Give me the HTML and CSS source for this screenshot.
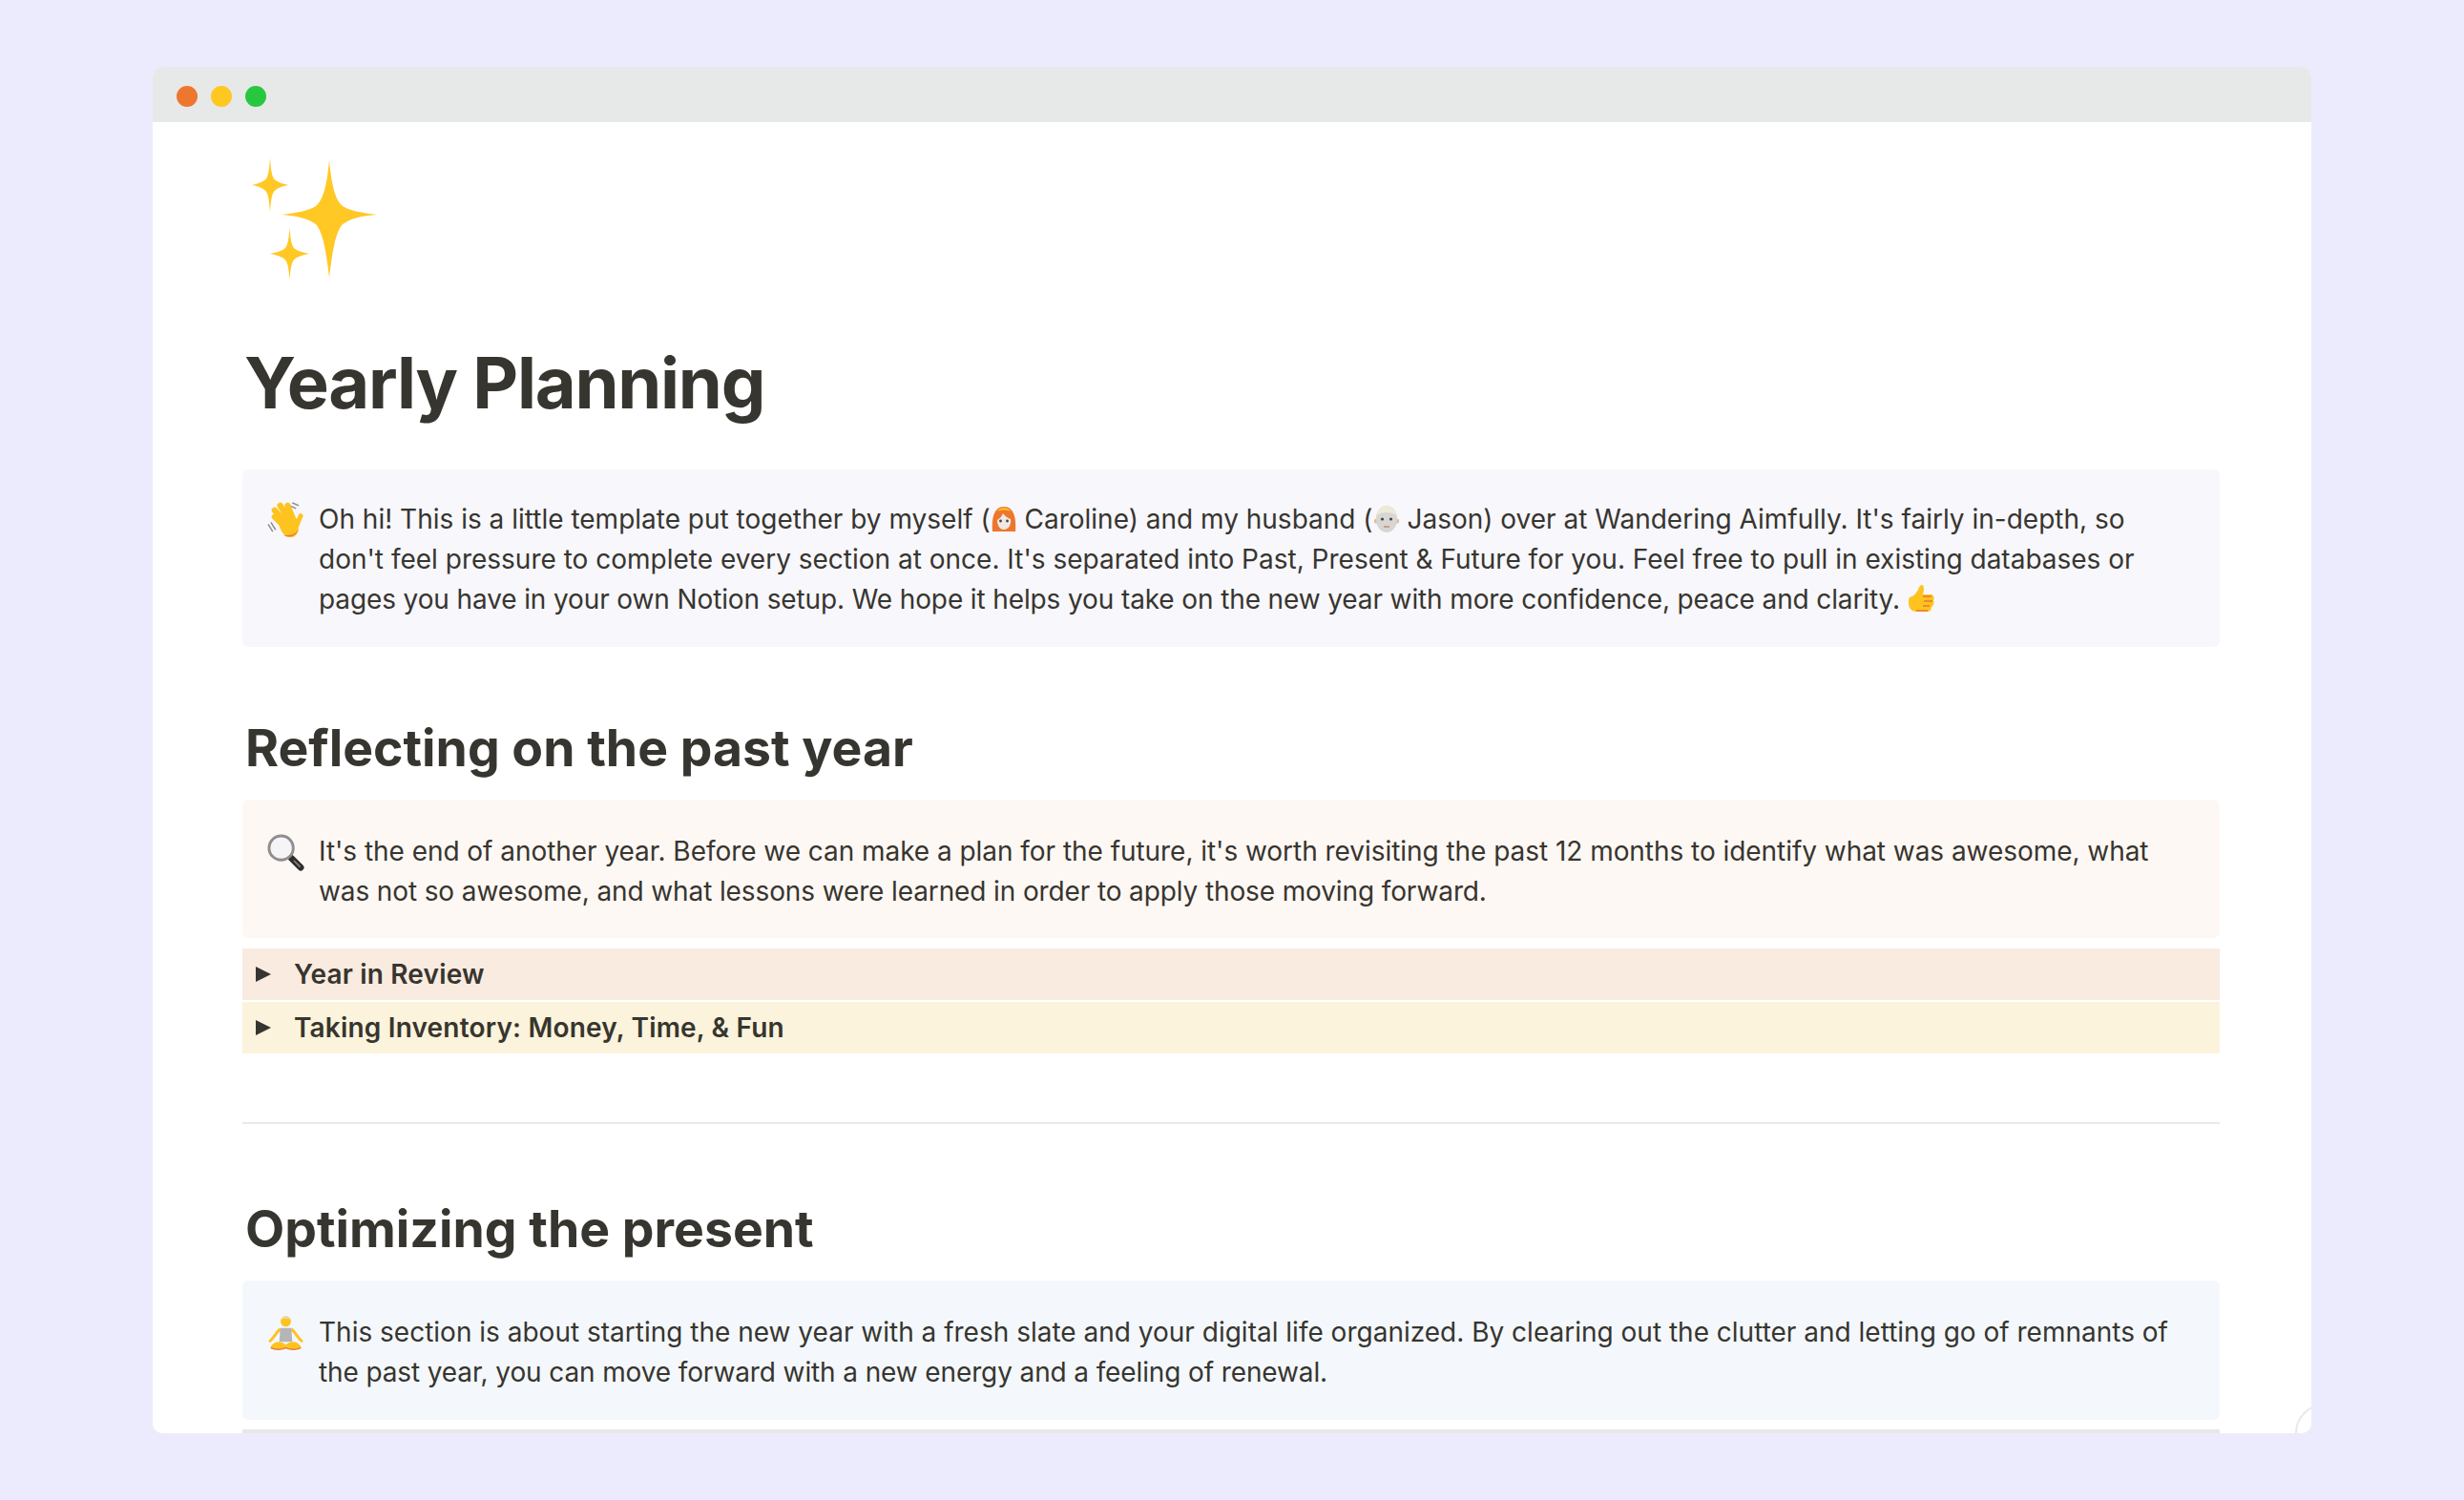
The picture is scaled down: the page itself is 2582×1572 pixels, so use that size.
FILE: index.html
```html
<!DOCTYPE html>
<html lang="en">
<head>
    <meta charset="UTF-8">
    <title>Yearly Planning</title>
    <link rel="stylesheet" href="styles.css">
</head>
<body>
    <div class="window">
        <div class="title-bar">
            <span class="dot dot-red"></span>
            <span class="dot dot-yellow"></span>
            <span class="dot dot-green"></span>
        </div>

        <div class="page">
            <svg class="page-icon" viewBox="0 0 132 128">
                <path class="star" d="M81 2C83.500 28 87 43 95 50C103 55 115 57 131 59C115 60 103 63 95 69C87 78 84 100 81 125C78 100 75 78 67 69C59 63 47 60 31 59C47 57 59 55 67 50C75 43 78.500 28 81 2Z"/>
                <path class="star" transform="translate(19 28) scale(19.500 29)" d="M0 -1C.05 -.45 .12 -.24 .32 -.16C.45 -.1 .7 -.03 1 0C.7 .03 .45 .1 .32 .16C.12 .24 .05 .45 0 1C-.05 .45 -.12 .24 -.32 .16C-.45 .1 -.7 .03 -1 0C-.7 -.03 -.45 -.1 -.32 -.16C-.12 -.24 -.05 -.45 0 -1Z"/>
                <path class="star" transform="translate(39.500 100) scale(21 27.500)" d="M0 -1C.05 -.45 .12 -.24 .32 -.16C.45 -.1 .7 -.03 1 0C.7 .03 .45 .1 .32 .16C.12 .24 .05 .45 0 1C-.05 .45 -.12 .24 -.32 .16C-.45 .1 -.7 .03 -1 0C-.7 -.03 -.45 -.1 -.32 -.16C-.12 -.24 -.05 -.45 0 -1Z"/>
            </svg>

            <h1 class="page-title">Yearly Planning</h1>

            <div class="callout callout-grey">
                <svg class="callout-icon" viewBox="0 0 40 40">
                    <path d="M1 24l5 8M4 22l5 8M24 4l7 3M27 1l7 3" fill="none" stroke="#8d8d8d" stroke-width="1.500"/>
                    <g stroke="#ffc31f" stroke-width="6.400" stroke-linecap="round">
                        <path d="M18 26L8 16M20 22L8 9M24 20L14 4M28 19L22 4"/>
                        <path d="M31 27L36 15" stroke-width="5"/>
                    </g>
                    <path d="M12 20C14 36 22 38 26 38C32 38 35 31 33 20C32 15 18 14 12 20Z" fill="#ffc31f"/>
                    <path d="M17 35C22 39 31 39 35 27C33 33 26 38 17 35Z" fill="#ed772f"/>
                </svg>
                <p class="callout-text">Oh hi! This is a little template put together by myself (<svg class="inline-emoji" viewBox="2 0 26 28">
                    <path d="M3 27C2 14 4 1 15 1C26 1 28 14 27 27Z" fill="#ed772f"/>
                    <path d="M8 6C10 1 20 1 22 6C18 4 12 4 8 6Z" fill="#ffc31f"/>
                    <path d="M8 15C11 13 13 11 14 8C16 11 19 13 22 14C23 21 19 25 15 25C11 25 8 21 8 15Z" fill="#efe9e2"/>
                    <circle cx="11.500" cy="16" r="1.400" fill="#444"/><circle cx="18.500" cy="16" r="1.400" fill="#444"/>
                </svg> Caroline) and my husband (<svg class="inline-emoji" viewBox="1 0 28 28">
                    <circle cx="4.500" cy="16" r="2.600" fill="#e9b98f"/><circle cx="25.500" cy="16" r="2.600" fill="#e9b98f"/>
                    <ellipse cx="15" cy="14" rx="11" ry="14" fill="#d6d6d2"/>
                    <path d="M5 10C6 3 11 0 15 0C19 0 24 3 25 10C19 6 11 6 5 10Z" fill="#efe9d8"/>
                    <circle cx="10.500" cy="14" r="1.600" fill="#444"/><circle cx="19.500" cy="14" r="1.600" fill="#444"/>
                    <path d="M12 22h6" stroke="#d08a70" stroke-width="1.500"/>
                </svg> Jason) over at Wandering Aimfully. It's fairly in-depth, so don't feel pressure to complete every section at once. It's separated into Past, Present &amp; Future for you. Feel free to pull in existing databases or <span class="tight">pages you have in your own Notion setup. We hope it helps you take on the new year with more confidence, peace and clarity.</span> <svg class="inline-emoji emoji-thumb" viewBox="1 0 28 30">
                    <path d="M3 14C7 13 10 10 12 6C13 3 14 1 16 1C19 2 18 8 17 11L26 11C29 12 29 16 28 17C29 20 28 23 26 24C26 27 24 29 22 29L10 29C6 29 2 26 2 20C2 17 2 15 3 14Z" fill="#ffc31f"/>
                    <path d="M17 13h9M18 18h9M17 23h7M10 28h12" stroke="#ed772f" stroke-width="1.600" fill="none"/>
                </svg></p>
            </div>

            <h2 class="section-title section-first">Reflecting on the past year</h2>

            <div class="callout callout-orange">
                <svg class="callout-icon" viewBox="0 0 40 40">
                    <path d="M26 26L36 36" stroke="#2e2e2e" stroke-width="7" stroke-linecap="round"/>
                    <path d="M29 29L35 35" stroke="#888" stroke-width="1.500" stroke-linecap="round"/>
                    <circle cx="15" cy="15" r="13" fill="#f5f5f7" stroke="#8e8e8e" stroke-width="3"/>
                </svg>
                <p class="callout-text">It's the end of another year. Before we can make a plan for the future, it's worth revisiting the past 12 months to identify what was awesome, what <span class="tight">was not so awesome, and what lessons were learned in order to apply those moving forward.</span></p>
            </div>

            <div class="toggle toggle-orange"><span class="toggle-arrow"></span>Year in Review</div>
            <div class="toggle toggle-yellow"><span class="toggle-arrow"></span>Taking Inventory: Money, Time, &amp; Fun</div>

            <hr class="divider">

            <h2 class="section-title">Optimizing the present</h2>

            <div class="callout callout-blue">
                <svg class="callout-icon" viewBox="0 0 40 40">
                    <path d="M13 16C9 20 7 25 3 28M27 16C31 20 33 25 37 28" fill="none" stroke="#ffc31f" stroke-width="3" stroke-linecap="round"/>
                    <path d="M14 14H26L27 29H13Z" fill="#b5b5b5"/>
                    <circle cx="20" cy="7" r="5.600" fill="#ffc31f"/>
                    <path d="M15 5C16 1 24 1 25 5C22 3.500 18 3.500 15 5Z" fill="#e3dccb"/>
                    <path d="M3 35C8 27 15 28 20 32C25 28 32 27 37 35C30 38 25 37 20 35C15 37 10 38 3 35Z" fill="#ffc31f"/>
                    <path d="M4 35.500C10 38 15 37.500 20 35.500C25 37.500 30 38 36 35.500" fill="none" stroke="#ed772f" stroke-width="1.500"/>
                </svg>
                <p class="callout-text">This section is about starting the new year with a fresh slate and your digital life organized. By clearing out the clutter and letting go of remnants of <span class="tight">the past year, you can move forward with a new energy and a feeling of renewal.</span></p>
            </div>

            <div class="toggle-cut"></div>
        </div>

        <div class="help-circle"></div>
    </div>
</body>
</html>
```

FILE: styles.css
```css
body {
    margin: 0;
    padding: 70px 160px 0;
    height: 1502px;
    background: #ebebfd;
    font-family: 'Inter', sans-serif;
    color: #37352f;
    overflow: hidden;
}

.window {
    position: relative;
    height: 1432px;
    background: #fff;
    border-radius: 10px;
    overflow: hidden;
}

.title-bar {
    display: flex;
    align-items: center;
    gap: 14px;
    box-sizing: border-box;
    height: 58px;
    padding: 3px 0 0 25px;
    background: #e7e9e8;
}

.dot {
    width: 22px;
    height: 22px;
    border-radius: 50%;
}

.dot-red { background: #ed772f; }
.dot-yellow { background: #ffc721; }
.dot-green { background: #27c840; }

.page {
    padding: 38px 96px 0 94px;
}

.page-icon {
    display: block;
    width: 132px;
    height: 128px;
    margin-left: 10px;
}

.star {
    fill: #ffc824;
}

.page-title {
    margin: 62px 0 0 2px;
    font-size: 74px;
    line-height: 90px;
    font-weight: 700;
    letter-spacing: -1.25px;
}

.callout {
    display: flex;
    align-items: flex-start;
    gap: 15px;
    border-radius: 6px;
}

.page-title + .callout {
    margin-top: 46px;
}

.callout-grey {
    padding: 31px 40px 29px 26px;
    background: #f7f7fc;
}

.callout-orange {
    padding: 33px 40px 28px 26px;
    background: #fef8f4;
    letter-spacing: -0.045px;
}

.callout-blue {
    padding: 33px 40px 29px 26px;
    background: #f4f8fc;
}

.callout-icon {
    flex: none;
    width: 39px;
    height: 39px;
    margin-top: 3px;
}

.callout-text {
    margin: 0;
    font-size: 28px;
    line-height: 42px;
}

.tight {
    letter-spacing: -0.12px;
}

.inline-emoji {
    width: 28px;
    height: 28px;
    vertical-align: -4px;
}

.emoji-thumb {
    height: 30px;
}

.section-title {
    margin: 80px 0 0 3px;
    font-size: 53.5px;
    line-height: 60px;
    font-weight: 700;
}

.section-first {
    margin-top: 76px;
}

.section-title + .callout {
    margin-top: 24px;
}

.toggle {
    display: flex;
    align-items: center;
    height: 54px;
    padding-left: 14px;
    font-size: 28px;
    font-weight: 600;
    letter-spacing: 0.18px;
}

.toggle-orange {
    margin-top: 11px;
    background: #f9ebdf;
}

.toggle-yellow {
    margin-top: 2px;
    background: #fbf3db;
}

.toggle-arrow {
    width: 0;
    height: 0;
    margin-right: 24px;
    border-left: 16px solid #37352f;
    border-top: 8.5px solid transparent;
    border-bottom: 8.5px solid transparent;
}

.divider {
    margin: 72px 0 0;
    border: none;
    border-top: 2px solid #e9e9e7;
}

.toggle-cut {
    height: 20px;
    margin-top: 10px;
    background: #e7e7e7;
}

.help-circle {
    position: absolute;
    left: 2245px;
    top: 1401px;
    width: 58px;
    height: 58px;
    border: 2px solid #e9e9e9;
    border-radius: 50%;
}
```
